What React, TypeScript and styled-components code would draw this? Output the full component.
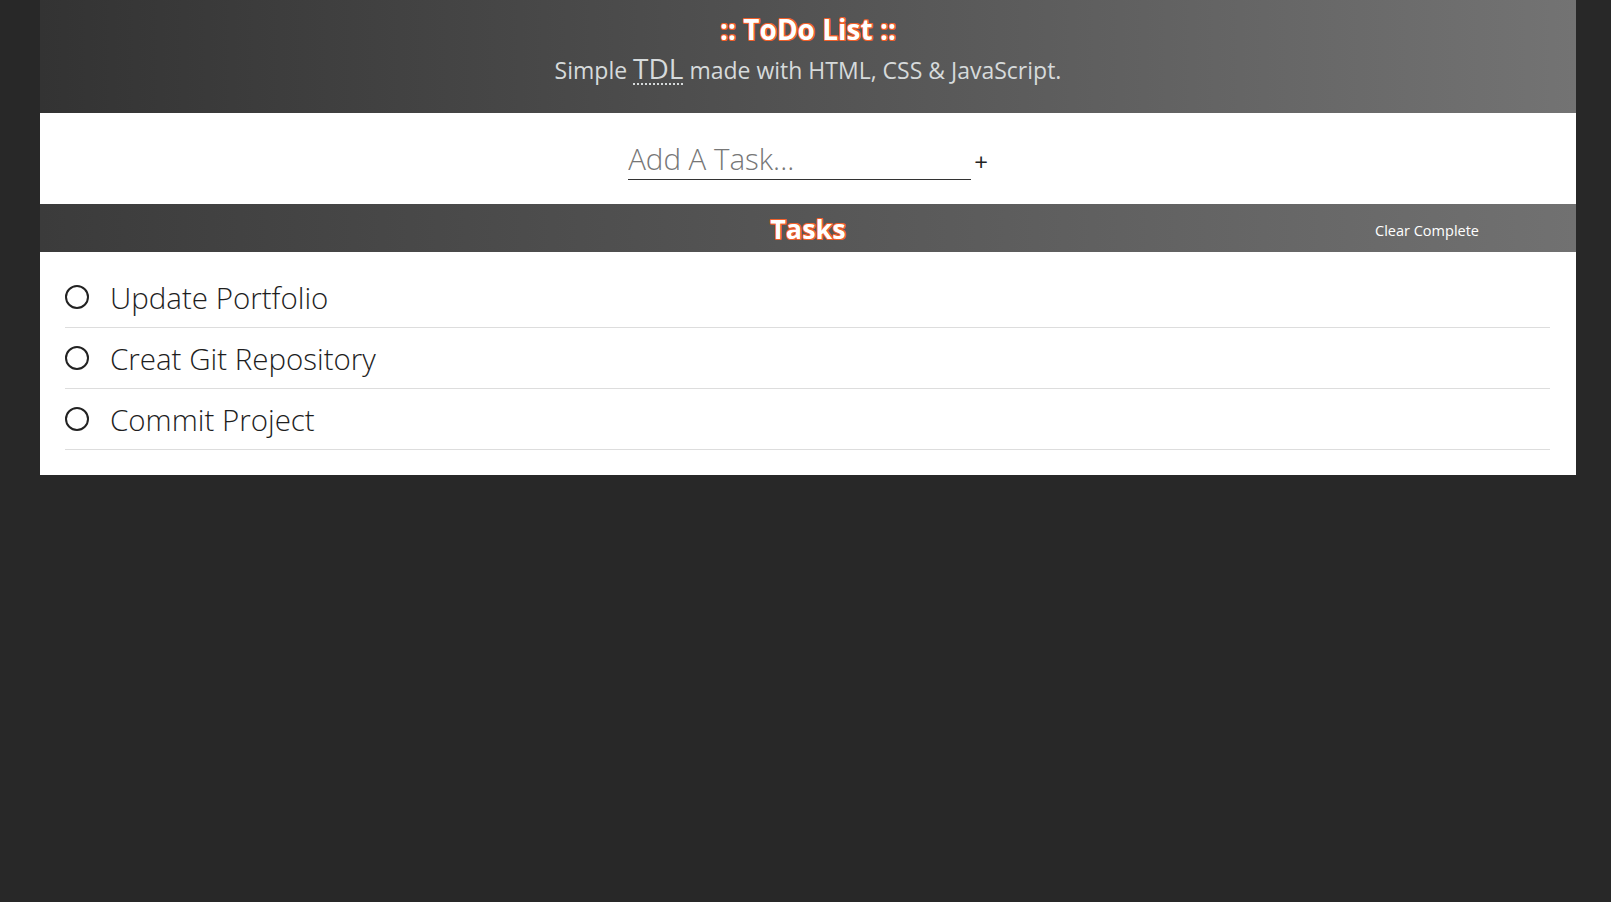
import React from "react";
import styled, { createGlobalStyle } from "styled-components";

const GlobalStyle = createGlobalStyle`
  html, body {
    margin: 0;
    padding: 0;
    background: #282828;
    font-family: "Open Sans", "Noto Sans", sans-serif;
  }
`;

const Page = styled.div`
  margin: 0 35px 0 40px;
  display: flex;
  flex-direction: column;
`;

const outline = `
  text-shadow:
    1px 0 0 #f0602a, -1px 0 0 #f0602a, 0 1px 0 #f0602a, 0 -1px 0 #f0602a,
    1px 1px 0 #f0602a, -1px -1px 0 #f0602a, 1px -1px 0 #f0602a, -1px 1px 0 #f0602a;
`;

const Header = styled.header`
  height: 113px;
  box-sizing: border-box;
  padding-top: 11px;
  background: linear-gradient(to right, #333333, #737373);
  text-align: center;
`;

const Title = styled.h1`
  margin: 0;
  font-size: 28px;
  line-height: 36px;
  font-weight: 700;
  color: #ffffff;
  ${outline}
`;

const Subtitle = styled.p`
  margin: 5px 0 0;
  font-size: 23px;
  line-height: 32px;
  color: #d6dadb;

  abbr {
    font-size: 28px;
    text-decoration: underline dotted;
    text-underline-offset: 4px;
    text-decoration-thickness: 2px;
  }
`;

const AddBar = styled.form`
  height: 91px;
  background: #ffffff;
  display: flex;
  justify-content: center;
  align-items: center;
`;

const TaskInput = styled.input`
  width: 343px;
  border: none;
  border-bottom: 1px solid #333;
  outline: none;
  font-family: inherit;
  font-size: 29.5px;
  font-weight: 300;
  color: #333;
  padding: 0;
  margin-top: 2px;
  line-height: 40px;

  &::placeholder {
    color: #777;
  }
`;

const AddButton = styled.button`
  border: none;
  background: none;
  font-family: inherit;
  font-size: 24px;
  color: #222;
  padding: 0 0 0 3px;
  margin-top: 6px;
  cursor: pointer;
`;

const TasksBar = styled.div`
  height: 48px;
  background: linear-gradient(to right, #3b3b3b, #717171);
  display: grid;
  grid-template-columns: 1fr auto 1fr;
  align-items: center;
`;

const TasksTitle = styled.h2`
  grid-column: 2;
  margin: 0;
  font-size: 27px;
  font-weight: 700;
  color: #ffffff;
  ${outline}
`;

const ClearButton = styled.button`
  justify-self: end;
  margin-right: 91px;
  margin-top: 4px;
  border: none;
  background: none;
  color: #ffffff;
  font-family: inherit;
  font-size: 14.5px;
  cursor: pointer;
`;

const List = styled.ul`
  list-style: none;
  margin: 0;
  padding: 15px 26px 25px 25px;
  background: #ffffff;
`;

const Item = styled.li`
  display: flex;
  align-items: center;
  gap: 21px;
  height: 60px;
  border-bottom: 1px solid #dddddd;
  font-size: 29.5px;
  font-weight: 300;
  color: #1e1e1e;
`;

const Circle = styled.span`
  width: 20px;
  height: 20px;
  border: 2px solid #222;
  border-radius: 50%;
  flex-shrink: 0;
`;

const tasks = ["Update Portfolio", "Creat Git Repository", "Commit Project"];

export default function App() {
  return (
    <>
      <GlobalStyle />
      <Page>
        <Header>
          <Title>:: ToDo List ::</Title>
          <Subtitle>
            Simple <abbr title="To Do List">TDL</abbr> made with HTML, CSS &amp; JavaScript.
          </Subtitle>
        </Header>
        <AddBar onSubmit={(e) => e.preventDefault()}>
          <TaskInput placeholder="Add A Task..." />
          <AddButton type="submit">+</AddButton>
        </AddBar>
        <TasksBar>
          <TasksTitle>Tasks</TasksTitle>
          <ClearButton type="button">Clear Complete</ClearButton>
        </TasksBar>
        <List>
          {tasks.map((t) => (
            <Item key={t}>
              <Circle />
              {t}
            </Item>
          ))}
        </List>
      </Page>
    </>
  );
}
